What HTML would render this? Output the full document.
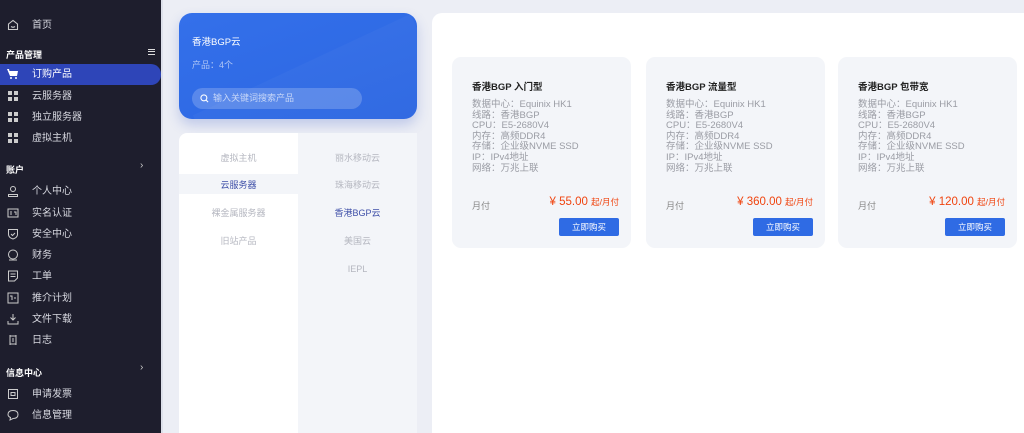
<!DOCTYPE html><html><head><meta charset="utf-8"><style>
*{margin:0;padding:0;box-sizing:border-box}
body{width:1024px;height:433px;overflow:hidden;background:#eceef5;font-family:"Liberation Sans","Noto Sans CJK SC",sans-serif;position:relative}
.sb{position:absolute;left:0;top:0;width:161px;height:433px;background:#1e1e2d;color:#d7d8e0;font-size:10px}
.it{position:absolute;left:0;width:161px;height:21px;line-height:21px;padding-left:32px}
.ic{position:absolute;left:7px;top:4px;width:12px;height:12px}
.sec{position:absolute;left:6px;font-size:9px;font-weight:bold;color:#fff}
.act{background:#2e45b8;border-radius:0 10px 10px 0;color:#fff}
.blue{position:absolute;left:179px;top:13px;width:238px;height:106px;border-radius:13px;background:linear-gradient(160deg,#3470ea,#2b66e2);box-shadow:0 6px 12px rgba(60,90,200,.25);color:#fff;overflow:hidden}
.list{position:absolute;left:179px;top:133px;width:238px;height:300px;background:#fff;border-radius:8px 0 0 0;overflow:hidden}
.col2{position:absolute;left:119px;top:0;width:119px;height:300px;background:#f3f5f9}
.li{position:absolute;width:119px;text-align:center;font-size:9px;color:#b5b7c0;height:20px;line-height:20px}
.main{position:absolute;left:432px;top:13px;width:592px;height:420px;background:#fff;border-radius:10px 0 0 0}
.card{position:absolute;top:44px;width:179px;height:191px;background:#f3f5f9;border-radius:9px}
.card h4{position:absolute;left:20px;top:22px;font-size:9.5px;color:#222}
.card .d{position:absolute;left:20px;top:43px;font-size:9.5px;line-height:10.6px;color:#9a9ca4}
.card .m{position:absolute;left:20px;top:142px;font-size:9px;color:#888}
.card .p{position:absolute;right:12px;top:139px;font-size:11.5px;color:#f0440f}
.card .p small{font-size:8.5px}
.card .b{position:absolute;right:12px;top:161px;width:60px;height:18px;background:#2f6be4;color:#fff;font-size:8.5px;text-align:center;line-height:18px;border-radius:2px}
</style></head><body>
<div class="sb">
<div class="it" style="top:15px"><svg class="ic" viewBox="0 0 12 12" fill="none" stroke="#ccc" stroke-width="1.1"><path d="M1.5 5L6 1.5 10.5 5v5.5h-9z"/><path d="M4 7.5q2 1.5 4 0"/></svg>首页</div>
<div class="sec" style="top:48px">产品管理</div><div style="position:absolute;left:148px;top:49px;width:7px;height:6px;border-top:1.5px solid #ddd;border-bottom:1.5px solid #ddd"><div style="margin-top:1.2px;border-top:1.5px solid #ddd"></div></div>
<div class="it act" style="top:64px"><svg class="ic" viewBox="0 0 12 12" fill="#fff"><path d="M0 1h2l.5 2H11l-1 5H3z"/><circle cx="4" cy="10" r="1"/><circle cx="9" cy="10" r="1"/></svg>订购产品</div>
<div class="it" style="top:86px"><svg class="ic" viewBox="0 0 12 12" fill="#ccc"><rect x="1" y="1" width="4" height="4"/><rect x="7" y="1" width="4" height="4"/><rect x="1" y="7" width="4" height="4"/><rect x="7" y="7" width="4" height="4"/></svg>云服务器</div>
<div class="it" style="top:107px"><svg class="ic" viewBox="0 0 12 12" fill="#ccc"><rect x="1" y="1" width="4" height="4"/><rect x="7" y="1" width="4" height="4"/><rect x="1" y="7" width="4" height="4"/><rect x="7" y="7" width="4" height="4"/></svg>独立服务器</div>
<div class="it" style="top:128px"><svg class="ic" viewBox="0 0 12 12" fill="#ccc"><rect x="1" y="1" width="4" height="4"/><rect x="7" y="1" width="4" height="4"/><rect x="1" y="7" width="4" height="4"/><rect x="7" y="7" width="4" height="4"/></svg>虚拟主机</div>
<div class="sec" style="top:163px">账户</div><div style="position:absolute;left:140px;top:160px;color:#ccc;font-size:10px">›</div>
<div class="it" style="top:181px"><svg class="ic" viewBox="0 0 12 12" fill="none" stroke="#ccc"><circle cx="6" cy="4" r="2.5"/><path d="M1.5 11.5v-2h9v2z"/></svg>个人中心</div>
<div class="it" style="top:203px"><svg class="ic" viewBox="0 0 12 12" fill="none" stroke="#ccc"><rect x="1" y="2" width="10" height="8"/><path d="M3 5h2M3 7h2M7 5h2v3"/></svg>实名认证</div>
<div class="it" style="top:224px"><svg class="ic" viewBox="0 0 12 12" fill="none" stroke="#ccc"><path d="M1.5 1.5h9v5q0 3-4.5 4.5Q1.5 9.5 1.5 6.5z"/><path d="M4 6l1.5 1.5L8 5"/></svg>安全中心</div>
<div class="it" style="top:245px"><svg class="ic" viewBox="0 0 12 12" fill="none" stroke="#ccc"><circle cx="6" cy="5.5" r="4.5"/><path d="M2 11h8"/></svg>财务</div>
<div class="it" style="top:266px"><svg class="ic" viewBox="0 0 12 12" fill="none" stroke="#ccc"><path d="M1.5 1h9v7l-3 3h-6z M3.5 4h5M3.5 6.5h5"/></svg>工单</div>
<div class="it" style="top:288px"><svg class="ic" viewBox="0 0 12 12" fill="none" stroke="#ccc"><rect x="1" y="1" width="10" height="10"/><path d="M3 4h2v4M7 6h2"/></svg>推介计划</div>
<div class="it" style="top:309px"><svg class="ic" viewBox="0 0 12 12" fill="none" stroke="#ccc"><path d="M6 1v6M3.5 4.5L6 7l2.5-2.5M1 8v3h10V8"/></svg>文件下载</div>
<div class="it" style="top:330px"><svg class="ic" viewBox="0 0 12 12" fill="none" stroke="#ccc"><path d="M3 1v10M9 1v10M3 2h6M3 10h6M5 5h2M5 7h2"/></svg>日志</div>
<div class="sec" style="top:366px">信息中心</div><div style="position:absolute;left:140px;top:362px;color:#ccc;font-size:10px">›</div>
<div class="it" style="top:384px"><svg class="ic" viewBox="0 0 12 12" fill="none" stroke="#ccc"><rect x="1.5" y="1.5" width="9" height="9"/><path d="M4 4.5h4v3H4z"/></svg>申请发票</div>
<div class="it" style="top:405px"><svg class="ic" viewBox="0 0 12 12" fill="none" stroke="#ccc"><path d="M1 5.5q0-4 5-4t5 4-5 4l-3 1.5.5-2.5Q1 7.5 1 5.5z"/></svg>信息管理</div>
</div>
<div style="position:absolute;left:161px;top:0;width:2px;height:433px;background:#dde0ea"></div>
<div class="blue">
<div style="position:absolute;right:-30px;bottom:-60px;width:240px;height:120px;background:rgba(255,255,255,.03);transform:rotate(-25deg)"></div>
<div style="position:absolute;left:13px;top:21px;font-size:9.5px">香港BGP云</div>
<div style="position:absolute;left:13px;top:45px;font-size:9px;color:rgba(255,255,255,.6)">产品：4个</div>
<div style="position:absolute;left:13px;top:75px;width:170px;height:21px;border-radius:11px;background:rgba(255,255,255,.2);font-size:9px;line-height:21px;padding-left:21px;color:rgba(255,255,255,.65)"><svg style="position:absolute;left:8px;top:6px" width="9" height="9" viewBox="0 0 10 10" fill="none" stroke="#fff" stroke-width="1.2"><circle cx="4.3" cy="4.3" r="3.3"/><path d="M6.8 6.8L9 9"/></svg>输入关键词搜索产品</div>
</div>
<div class="list"><div class="col2"></div>
<div style="position:absolute;left:0;top:41px;width:119px;height:20px;background:#f3f5f9"></div>
<div class="li" style="left:0;top:15px">虚拟主机</div>
<div class="li" style="left:0;top:42px;color:#3e4fa8">云服务器</div>
<div class="li" style="left:0;top:70px">裸金属服务器</div>
<div class="li" style="left:0;top:98px">旧站产品</div>
<div class="li" style="left:119px;top:15px">丽水移动云</div>
<div class="li" style="left:119px;top:42px">珠海移动云</div>
<div class="li" style="left:119px;top:70px;color:#3e4fa8">香港BGP云</div>
<div class="li" style="left:119px;top:98px">美国云</div>
<div class="li" style="left:119px;top:126px">IEPL</div>
</div>
<div class="main">
<div class="card" style="left:20px"><h4>香港BGP 入门型</h4><div class="d">数据中心：Equinix HK1<br>线路：香港BGP<br>CPU：E5-2680V4<br>内存：高频DDR4<br>存储：企业级NVME SSD<br>IP：IPv4地址<br>网络：万兆上联</div><div class="m">月付</div><div class="p">¥ 55.00 <small>起/月付</small></div><div class="b">立即购买</div></div>
<div class="card" style="left:214px"><h4>香港BGP 流量型</h4><div class="d">数据中心：Equinix HK1<br>线路：香港BGP<br>CPU：E5-2680V4<br>内存：高频DDR4<br>存储：企业级NVME SSD<br>IP：IPv4地址<br>网络：万兆上联</div><div class="m">月付</div><div class="p">¥ 360.00 <small>起/月付</small></div><div class="b">立即购买</div></div>
<div class="card" style="left:406px"><h4>香港BGP 包带宽</h4><div class="d">数据中心：Equinix HK1<br>线路：香港BGP<br>CPU：E5-2680V4<br>内存：高频DDR4<br>存储：企业级NVME SSD<br>IP：IPv4地址<br>网络：万兆上联</div><div class="m">月付</div><div class="p">¥ 120.00 <small>起/月付</small></div><div class="b">立即购买</div></div>
</div>
</body></html>
